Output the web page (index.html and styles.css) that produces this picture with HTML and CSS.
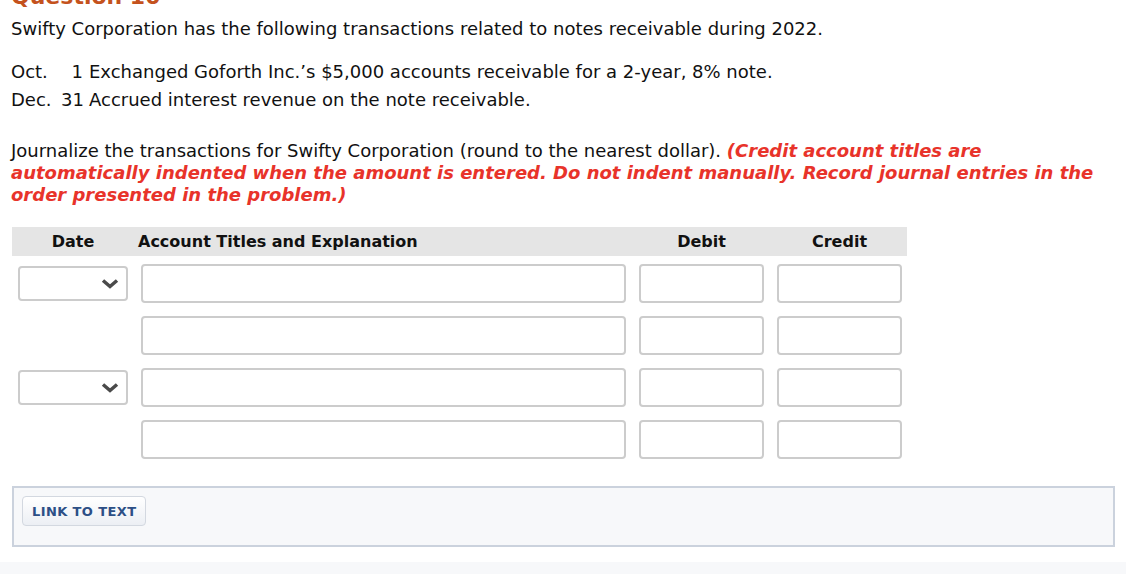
FILE: index.html
```html
<!DOCTYPE html>
<html>
<head>
<meta charset="utf-8">
<link rel="stylesheet" href="styles.css">
</head>
<body>
<div class="page">
  <h2 class="qtitle">Question 10</h2>
  <p class="intro">Swifty Corporation has the following transactions related to notes receivable during 2022.</p>
  <div class="txns">
    <div class="txn"><span class="mon">Oct.</span><span class="day">1</span><span>Exchanged Goforth Inc.’s $5,000 accounts receivable for a 2-year, 8% note.</span></div>
    <div class="txn"><span class="mon">Dec.</span><span class="day">31</span><span>Accrued interest revenue on the note receivable.</span></div>
  </div>
  <p class="instr">Journalize the transactions for Swifty Corporation (round to the nearest dollar). <em class="warn">(Credit account titles are automatically indented when the amount is entered. Do not indent manually. Record journal entries in the order presented in the problem.)</em></p>

  <div class="journal">
    <div class="jhead">
      <div class="hc center">Date</div>
      <div class="hc">Account Titles and Explanation</div>
      <div class="hc center">Debit</div>
      <div class="hc center">Credit</div>
    </div>
    <div class="jrow">
      <div class="sel"><svg width="18" height="10" viewBox="0 0 18 10"><path d="M2 1.5 L9 7.5 L16 1.5" fill="none" stroke="#4a4a4a" stroke-width="3.5"/></svg></div>
      <div class="inp"></div><div class="inp"></div><div class="inp"></div>
    </div>
    <div class="jrow">
      <div></div>
      <div class="inp"></div><div class="inp"></div><div class="inp"></div>
    </div>
    <div class="jrow">
      <div class="sel"><svg width="18" height="10" viewBox="0 0 18 10"><path d="M2 1.5 L9 7.5 L16 1.5" fill="none" stroke="#4a4a4a" stroke-width="3.5"/></svg></div>
      <div class="inp"></div><div class="inp"></div><div class="inp"></div>
    </div>
    <div class="jrow">
      <div></div>
      <div class="inp"></div><div class="inp"></div><div class="inp"></div>
    </div>
  </div>

  <div class="linkbox">
    <button class="linkbtn">LINK TO TEXT</button>
  </div>
</div>
<div class="footstrip"></div>
</body>
</html>
```
FILE: styles.css
```css
html, body {
  margin: 0;
  padding: 0;
  background: #fff;
}
body {
  font-family: "DejaVu Sans", Verdana, sans-serif;
  font-size: 18px;
  color: #111;
  overflow: hidden;
}
.page {
  padding: 0 11px 0 11px;
}
.qtitle {
  margin: -14px 0 0 0;
  height: 22px;
  font-size: 22px;
  line-height: 22px;
  font-weight: bold;
  color: #c4521d;
}
.intro {
  margin: 10px 0 0 0;
  line-height: 22px;
}
.txns {
  margin-top: 18px;
}
.txn {
  line-height: 28px;
  display: flex;
}
.mon {
  width: 50px;
}
.day {
  width: 22px;
  text-align: right;
  margin-right: 6px;
}
.instr {
  margin: 26px 0 0 0;
  line-height: 22px;
}
.warn {
  color: #e8332a;
  font-weight: bold;
  font-style: italic;
}
.journal {
  width: 895px;
  margin: 21px 0 0 1px;
}
.jhead, .jrow {
  display: grid;
  grid-template-columns: 110px 485px 125px 125px;
  column-gap: 13px;
  padding-left: 6px;
}
.jhead {
  background: #e5e5e5;
  height: 29px;
  align-items: center;
  font-weight: bold;
  font-size: 16px;
  margin-bottom: 8px;
}
.hc.center { text-align: center; }
.jhead .hc:nth-child(2) { margin-left: -3px; }
.jrow {
  height: 39px;
  margin-bottom: 13px;
  align-items: center;
}
.jrow:last-child { margin-bottom: 0; }
.inp {
  height: 39px;
  box-sizing: border-box;
  border: 2px solid #cccccc;
  border-radius: 4px;
  background: #fff;
}
.sel {
  height: 35px;
  box-sizing: border-box;
  border: 2px solid #cccccc;
  border-radius: 4px;
  background: #fff;
  display: flex;
  align-items: center;
  justify-content: flex-end;
  padding-right: 7px;
}
.linkbox {
  margin: 27px 0 0 1px;
  height: 61px;
  box-sizing: border-box;
  border: 2px solid #cbd2dd;
  background: #f7f8fa;
  padding: 8px 8px;
}
.linkbtn {
  height: 30px;
  padding: 0 9px;
  border: 1px solid #d3d8e0;
  border-radius: 4px;
  background: linear-gradient(#ffffff, #eceff4);
  font-family: "DejaVu Sans", Verdana, sans-serif;
  font-weight: bold;
  font-size: 13px;
  color: #2c4f86;
  letter-spacing: 0.4px;
}
.footstrip {
  margin-top: 15px;
  height: 20px;
  background: #f7f8fa;
}
```
